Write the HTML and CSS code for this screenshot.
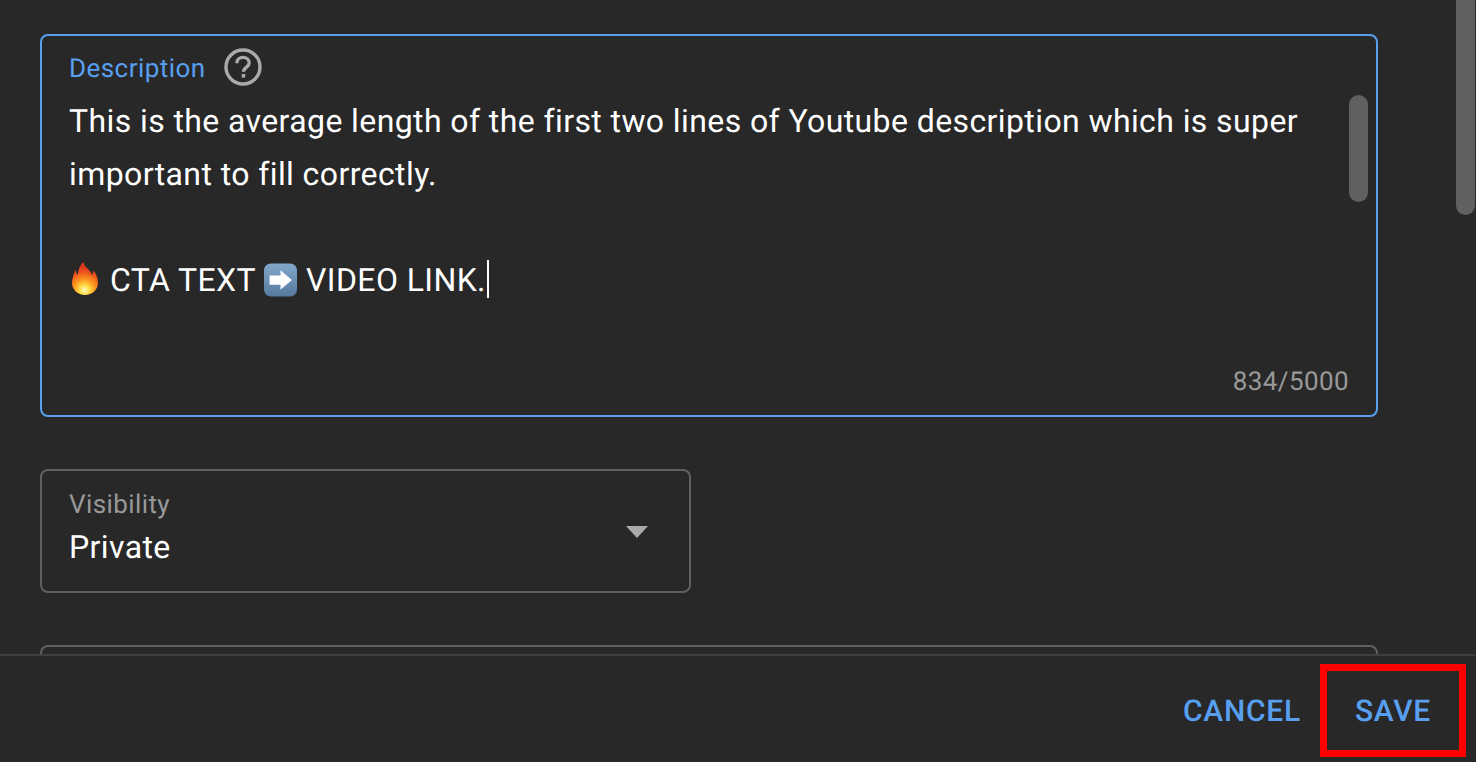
FILE: index.html
```html
<!DOCTYPE html>
<html lang="en">
<head>
<meta charset="utf-8">
<title>Details</title>
<link rel="stylesheet" href="styles.css">
</head>
<body>
<div class="dialog">
  <main class="content">
    <section class="field description">
      <div class="label-row">
        <span class="label-blue">Description</span>
        <svg class="help" viewBox="0 0 38 38" aria-hidden="true">
          <circle cx="19" cy="19" r="17" fill="none" stroke="#aaaaaa" stroke-width="3.4"/>
          <path d="M12.800 15.200c0-3.400 2.700-5.800 6.200-5.800s6.200 2.300 6.200 5.500c0 4.100-5.700 4.300-5.700 8.900" fill="none" stroke="#aaaaaa" stroke-width="3.400"/>
          <rect x="17.700" y="26" width="3.600" height="3.600" fill="#aaaaaa"/>
        </svg>
      </div>
      <div class="text">
        <p>This is the average length of the first two lines of Youtube description which is super</p>
        <p>important to fill correctly.</p>
        <p class="blank">&nbsp;</p>
        <p class="cta">
          <svg class="emoji fire" viewBox="0 0 26 33" aria-hidden="true">
            <defs>
              <radialGradient id="flame" gradientUnits="userSpaceOnUse" cx="12.500" cy="28" r="23">
                <stop offset="0" stop-color="#fff8c8"/>
                <stop offset="0.2" stop-color="#ffdf4a"/>
                <stop offset="0.45" stop-color="#fd9a20"/>
                <stop offset="0.8" stop-color="#ee4f1e"/>
                <stop offset="1" stop-color="#d9391c"/>
              </radialGradient>
            </defs>
            <path d="M11.500 0C12 5 19 8 20 13c1-1.500 1.500-3 1-5 3.500 4 5 8 5 13 0 7-6 12-13 12S0 28 0 21c0-4 1.500-8 3.500-13.500.5 2.500 1 4.500 2.500 5.500 0-5 2-10 5.500-13z" fill="url(#flame)"/>
          </svg><span class="cta-text">CTA TEXT</span><svg class="emoji arrow" viewBox="0 0 34 34" aria-hidden="true">
            <defs>
              <linearGradient id="key" x1="0" y1="0" x2="0" y2="1">
                <stop offset="0" stop-color="#82a8cc"/>
                <stop offset="1" stop-color="#567a9e"/>
              </linearGradient>
            </defs>
            <rect x="0" y="0" width="34" height="34" rx="7" fill="url(#key)"/>
            <path d="M5.700 12.400H17V7l11.700 10L17 27v-5.100H5.700z" fill="#ffffff"/>
          </svg><span class="cta-link">VIDEO LINK.</span><span class="caret"></span>
        </p>
      </div>
      <div class="counter">834/5000</div>
      <div class="thumb inner-thumb"></div>
    </section>

    <section class="field select">
      <div class="select-text">
        <div class="label-grey">Visibility</div>
        <div class="value">Private</div>
      </div>
      <div class="triangle"></div>
    </section>

    <section class="field next"></section>
  </main>

  <footer class="actions">
    <button class="action cancel">CANCEL</button>
    <div class="highlight"><button class="action">SAVE</button></div>
  </footer>

  <div class="thumb outer-thumb"></div>
</div>
</body>
</html>
```
FILE: styles.css
```css
* { box-sizing: border-box; }
html, body { margin: 0; height: 100%; }
body {
  background: #282828;
  color: #ffffff;
  font-family: Roboto, "Liberation Sans", sans-serif;
  letter-spacing: 0.4px;
  text-rendering: geometricPrecision;
  overflow: hidden;
}
.dialog {
  position: relative;
  width: 1476px;
  height: 762px;
  display: flex;
  flex-direction: column;
}
.content {
  height: 654px;
  overflow: hidden;
  padding: 34px 98px 0 40px;
  flex: none;
}
.field {
  border: 2px solid #606060;
  border-radius: 8px;
}
.description {
  position: relative;
  height: 383px;
  border-color: #589ff0;
  padding: 12px 27px 0;
}
.label-row {
  display: flex;
  align-items: center;
  gap: 18px;
  height: 38px;
}
.label-blue {
  font-size: 26px;
  color: #589ff0;
  padding-top: 4px;
  letter-spacing: 0.45px;
}
.help { width: 38px; height: 38px; flex: none; }
.text {
  font-size: 32px;
  line-height: 53px;
  margin-top: 9px;
  white-space: nowrap;
}
.text p { margin: 0; height: 53px; }
.cta { display: flex; align-items: center; }
.emoji { flex: none; }
.fire { width: 26px; height: 33px; margin: 0 0 4px 3px; }
.cta-text { margin-left: 12px; }
.arrow { width: 33px; height: 34px; margin: 0 8px 2px; }
.cta-link { margin-left: 1px; }
.caret {
  width: 2px;
  height: 38px;
  background: #ffffff;
  margin: 0 0 3px 1px;
}
.counter {
  position: absolute;
  right: 27px;
  bottom: 18px;
  font-size: 26px;
  line-height: 30px;
  color: #999999;
}
.thumb {
  position: absolute;
  width: 19px;
  background: #606060;
  border-radius: 10px;
}
.inner-thumb { top: 59px; right: 8px; height: 107px; }
.outer-thumb { top: -20px; right: 1px; height: 235px; }
.select {
  margin-top: 52px;
  width: 651px;
  height: 124px;
  padding: 18px 27px 0;
  display: flex;
  justify-content: space-between;
}
.label-grey {
  font-size: 26px;
  line-height: 32px;
  color: #999999;
}
.value {
  font-size: 32px;
  line-height: 46px;
  margin-top: 3px;
}
.triangle {
  width: 0;
  height: 0;
  margin: 37px 14px 0 0;
  border-left: 11.5px solid transparent;
  border-right: 11.5px solid transparent;
  border-top: 12px solid #aaaaaa;
}
.next {
  margin-top: 52px;
  height: 120px;
}
.actions {
  flex: 1;
  border-top: 2px solid #3e3e3e;
  display: flex;
  justify-content: flex-end;
  align-items: flex-start;
  padding: 8px 10px 0 0;
}
.action {
  background: none;
  border: 0;
  padding: 1px 0 0;
  font-family: inherit;
  font-size: 30px;
  font-weight: 500;
  letter-spacing: 0.75px;
  color: #589ff0;
  line-height: 79px;
  text-rendering: inherit;
}
.cancel { margin-right: 19px; line-height: 93px; }
.highlight {
  width: 146px;
  height: 93px;
  border: 7px solid #ff0000;
  display: flex;
  justify-content: center;
  align-items: flex-start;
}
```
